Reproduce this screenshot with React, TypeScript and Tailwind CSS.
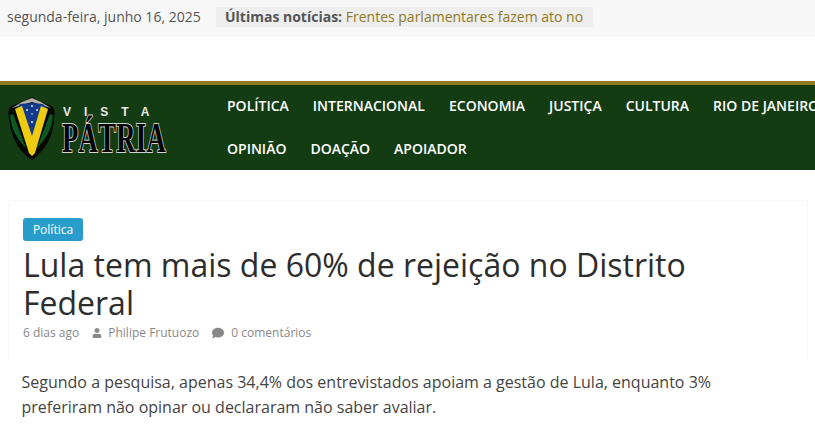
import React from 'react';
import { FaUser, FaComment } from 'react-icons/fa';

const navItems = ['POLÍTICA', 'INTERNACIONAL', 'ECONOMIA', 'JUSTIÇA', 'CULTURA', 'RIO DE JANEIRO', 'OPINIÃO', 'DOAÇÃO', 'APOIADOR'];

function Shield() {
  return (
    <svg width="47" height="63" viewBox="0 0 47 63" className="shrink-0">
      <path d="M24 0 L33 5 L44 9 C47 12 47 16 46 22 C45 40 37 54 24 63 C10 54 3 40 1 22 C0 16 0 12 3 9 L14 5 Z" fill="#050805" />
      <path d="M4 11 L14 5 L24 1 L33 5 L43 11 L33 8 L24 5 L14 8 Z" fill="#b0aea6" />
      <path d="M12 7 L24 6 L35 7 L40 12 L25 48 L23 48 L8 12 Z" fill="#123a8a" />
      <path d="M42 17 L45 18 C44 32 38 42 29 51 Z" fill="#0c5a22" />
      <path d="M5 17 L2 18 C3 32 9 42 18 51 Z" fill="#0c5a22" />
      <path d="M7 12 L14 9 L24 39 L33 9 L40 12 L27 56 L24 59 L21 56 Z" fill="#edcb10" />
      <circle cx="24" cy="9" r="1" fill="#dfe8f5" />
      <circle cx="19" cy="13" r="1" fill="#dfe8f5" />
      <circle cx="29" cy="13" r="1" fill="#dfe8f5" />
      <circle cx="24" cy="17" r="0.8" fill="#dfe8f5" />
      <circle cx="24" cy="25" r="1.1" fill="#dfe8f5" />
    </svg>
  );
}

export default function App() {
  return (
    <div className="w-[815px] h-[437px] overflow-hidden bg-white font-['Open_Sans',sans-serif] text-[#444]">
      <div className="h-[37px] bg-[#f7f7f7] flex items-start pt-[7px] pl-[7px] text-sm leading-5">
        <span className="w-[209px] text-[#555]">segunda-feira, junho 16, 2025</span>
        <div className="w-[377px] h-5 bg-[#eeeeee] pl-[9px] whitespace-nowrap">
          <span className="font-bold text-[#555]">Últimas notícias: </span>
          <span className="text-[#8f7a1f]">Frentes parlamentares fazem ato no</span>
        </div>
      </div>

      <header className="mt-[44px] h-[89px] border-t-4 border-[#8f7a1f] bg-[#133c13] flex">
        <div className="w-[227px] shrink-0 pl-2 pt-3 flex">
          <Shield />
          <div className="ml-[7px] pt-[9px] font-['Liberation_Serif',serif] whitespace-nowrap">
            <div className="pl-px text-xs leading-[12px] font-bold tracking-[13px] text-[#e8e8e8] font-['Liberation_Sans',sans-serif]">VISTA</div>
            <div className="mt-[2px] text-[43px] leading-[36px] font-bold text-black tracking-[0.5px] [-webkit-text-stroke:2px_#d5d5d5] [paint-order:stroke_fill] scale-x-[0.62] origin-left">
              PÁTRIA
            </div>
          </div>
        </div>
        <nav className="w-[620px] shrink-0 -mt-px flex flex-wrap gap-x-6 content-start text-sm font-semibold text-white">
          {navItems.map((item) => (
            <a key={item} className="h-[43px] leading-[43px] whitespace-nowrap">
              {item}
            </a>
          ))}
        </nav>
      </header>

      <article className="mt-[30px] mx-2 w-[800px] h-[160px] rounded-t-[3px] border border-b-0 border-[#f8f8f8] pl-[14px] pt-[15px]">
        <span className="inline-block h-[23px] w-[60px] rounded-[3px] bg-[#289dcc] text-center text-xs leading-[23px] text-white">
          Política
        </span>
        <h1 className="mt-[5px] pr-[60px] text-[32px] leading-[38px] text-[#2d2d2d]">
          Lula tem mais de 60% de rejeição no Distrito Federal
        </h1>
        <div className="mt-px flex items-center text-xs leading-5 text-[#888]">
          <span>6 dias ago</span>
          <FaUser className="ml-[13px] mr-[6px] text-[10px]" />
          <span>Philipe Frutuozo</span>
          <FaComment className="ml-[13px] mr-[7px] text-xs" />
          <span>0 comentários</span>
        </div>
      </article>

      <p className="mt-[10px] pl-[21.5px] pr-[22px] text-base leading-[25px] text-[#444]">
        Segundo a pesquisa, apenas 34,4% dos entrevistados apoiam a gestão de Lula, enquanto 3% preferiram não opinar ou
        declararam não saber avaliar.
      </p>
    </div>
  );
}
